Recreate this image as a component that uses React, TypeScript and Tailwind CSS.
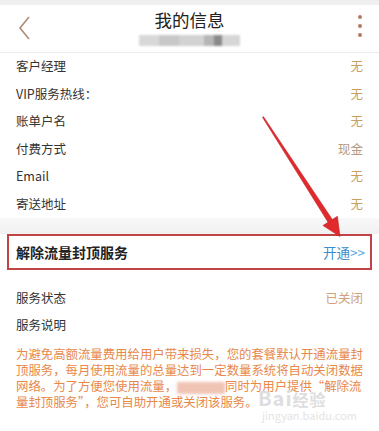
import React from "react";

const rows: [string, string][] = [
  ["客户经理", "无"],
  ["VIP服务热线：", "无"],
  ["账单户名", "无"],
  ["付费方式", "现金"],
  ["Email", "无"],
  ["寄送地址", "无"],
];

export default function App() {
  return (
    <div
      className="relative w-[379px] h-[431px] overflow-hidden bg-white text-[#333]"
      style={{ fontFamily: '"Noto Sans CJK SC", "Noto Sans", sans-serif' }}
    >
      <div className="h-[5px] bg-[#efefef]" />
      <div className="relative h-[48px] bg-white border-b border-[#ececec] flex flex-col items-center">
        <div className="absolute left-[17px] top-[10px]">
          <svg width="14" height="26" viewBox="0 0 14 26">
            <path d="M12 2 L3 13 L12 24" fill="none" stroke="#b08a74" strokeWidth="1.6" />
          </svg>
        </div>
        <div className="text-[17.5px] leading-[22px] mt-[4px] text-[#222]">我的信息</div>
        <div className="mt-[4px] flex h-[11px] w-[101px] blur-[1px]">
          <div className="w-[20px] bg-[#d8d8d8]" />
          <div className="w-[20px] bg-[#c8c8c8]" />
          <div className="w-[25px] bg-[#d2d2d2]" />
          <div className="w-[10px] bg-[#b6b6b6]" />
          <div className="w-[8px] bg-[#8a8a8a]" />
          <div className="w-[18px] bg-[#d6d6d6]" />
        </div>
        <div className="absolute right-[17px] top-[10px] flex flex-col gap-[5px]">
          <div className="w-[4px] h-[4px] rounded-full bg-[#b07a64]" />
          <div className="w-[4px] h-[4px] rounded-full bg-[#b07a64]" />
          <div className="w-[4px] h-[4px] rounded-full bg-[#b07a64]" />
        </div>
      </div>

      <div className="flex flex-col">
        {rows.map(([k, v]) => (
          <div key={k} className="h-[27.5px] flex items-center justify-between pl-[16px] pr-[16px] text-[12.5px]">
            <span className="text-[#333]">{k}</span>
            <span className={v === "现金" ? "text-[#b59a84]" : "text-[#c9a060]"}>{v}</span>
          </div>
        ))}
      </div>

      <div className="h-[16px] bg-gradient-to-b from-[#f8f8f8] to-[#f1f1f1]" />

      <div className="bg-white">
        <div className="mx-[7px] h-[36px] border-2 border-[#c04446] flex items-center justify-between pl-[7px] pr-[5px]">
          <span className="text-[14px] font-bold text-[#222]">解除流量封顶服务</span>
          <span className="text-[13.5px] text-[#3a8ccc]">
            开通<span className="text-[#5aa7dc]">&gt;&gt;</span>
          </span>
        </div>
      </div>

      <div className="pt-[14px] px-[16px]">
        <div className="h-[28px] flex items-center justify-between text-[12.5px]">
          <span>服务状态</span>
          <span className="text-[#d2a07a]">已关闭</span>
        </div>
        <div className="h-[27px] flex items-center text-[12.5px]">服务说明</div>
        <div className="mt-[7px] text-[12.4px] leading-[16px] text-[#e8884a] tracking-[0px]">
          为避免高额流量费用给用户带来损失，您的套餐默认开通流量封顶服务，每月使用流量的总量达到一定数量系统将自动关闭数据网络。为了方便您使用流量，
          <span className="inline-block align-middle w-[48px] h-[12px] bg-[#f0c4b4] blur-[1.5px]" />
          同时为用户提供“解除流量封顶服务”，您可自助开通或关闭该服务。
        </div>
      </div>

      <div className="absolute left-[258px] top-[388px] text-[#dedede] text-[20px] font-bold leading-none tracking-[1px]">
        Bai<span className="text-[16px]">经验</span>
      </div>
      <div className="absolute left-[262px] top-[410px] text-[#e4e4e4] text-[11px] leading-none">
        jingyan.baidu.com
      </div>

      <svg className="absolute left-0 top-0 pointer-events-none" width="379" height="431">
        <polygon
          points="262.5,117.3 263.5,116.7 332.3,219.5 337.4,216.3 340,236.5 323,225.5 328.1,222.3"
          fill="#e02a2c"
          stroke="#c41e22"
          strokeWidth="0.6"
        />
      </svg>
    </div>
  );
}
